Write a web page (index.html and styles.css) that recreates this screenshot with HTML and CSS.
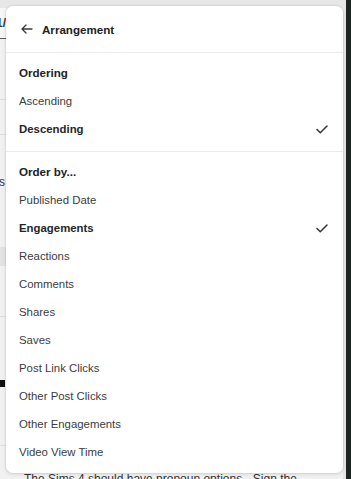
FILE: index.html
```html
<!DOCTYPE html>
<html>
<head>
<meta charset="utf-8">
<link rel="stylesheet" href="styles.css">
</head>
<body>
<div class="screen">
  <div class="page">
    <div class="topbar"></div>
    <div class="tabrow"><span class="tab">11/</span></div>
    <div class="gap g1"></div>
    <div class="rule"></div>
    <div class="gap g2"></div>
    <div class="rule"></div>
    <div class="gap g3"></div>
    <div class="frag">Posts</div>
    <div class="gap g4"></div>
    <div class="block"></div>
    <div class="gap g5"></div>
    <div class="rule"></div>
    <div class="gap g6"></div>
    <div class="dark"></div>
    <div class="gap g7"></div>
    <div class="rule"></div>
    <div class="gap g8"></div>
    <div class="caption">The Sims 4 should have pronoun options - Sign the</div>
  </div>
  <div class="strip"><div class="strip-light"></div><div class="strip-dark"></div></div>

  <div class="menu">
    <div class="menu-header">
      <svg class="back" width="12" height="10" viewBox="0 0 12 10"><path d="M11 5H1.5M5 1L1 5l4 4" fill="none" stroke="#3a3a3a" stroke-width="1.3" stroke-linecap="round" stroke-linejoin="round"/></svg>
      <span class="title">Arrangement</span>
    </div>
    <div class="section">
      <div class="heading">Ordering</div>
      <div class="item">Ascending</div>
      <div class="item selected">Descending<svg class="check" width="12" height="9" viewBox="0 0 12 9"><path d="M1 4.5l3.3 3.2L11 1" fill="none" stroke="#333" stroke-width="1.5" stroke-linecap="round" stroke-linejoin="round"/></svg></div>
    </div>
    <div class="section last">
      <div class="heading">Order by...</div>
      <div class="item">Published Date</div>
      <div class="item selected">Engagements<svg class="check" width="12" height="9" viewBox="0 0 12 9"><path d="M1 4.5l3.3 3.2L11 1" fill="none" stroke="#333" stroke-width="1.5" stroke-linecap="round" stroke-linejoin="round"/></svg></div>
      <div class="item">Reactions</div>
      <div class="item">Comments</div>
      <div class="item">Shares</div>
      <div class="item">Saves</div>
      <div class="item">Post Link Clicks</div>
      <div class="item">Other Post Clicks</div>
      <div class="item">Other Engagements</div>
      <div class="item">Video View Time</div>
    </div>
  </div>
</div>
</body>
</html>
```

FILE: styles.css
```css
* { box-sizing: border-box; }
html, body { margin: 0; padding: 0; }
body {
  width: 351px;
  height: 479px;
  overflow: hidden;
  background: #efefef;
  font-family: "Liberation Sans", Arial, sans-serif;
}
.screen {
  position: relative;
  display: flex;
  width: 351px;
  height: 479px;
  overflow: hidden;
}
.page {
  flex: 1;
  display: flex;
  flex-direction: column;
  background: #f1f1f1;
}
.topbar { height: 8px; background: #e7e7e7; flex: none; }
.tabrow {
  flex: none;
  height: 31px;
  border-bottom: 1px solid #5a5a5a;
  width: 6px;
  overflow: hidden;
  display: flex;
  align-items: center;
  justify-content: flex-end;
  background: #f6f6f6;
}
.tab { font-size: 12px; font-weight: 700; color: #333; white-space: nowrap; }
.gap { flex: none; }
.g1 { height: 60px; }
.g2 { height: 34px; }
.g3 { height: 40px; }
.g4 { height: 58px; }
.g5 { height: 50px; }
.g6 { height: 63px; }
.g7 { height: 58px; }
.g8 { height: 26px; }
.rule { height: 1px; background: #dedede; flex: none; }
.frag {
  flex: none;
  width: 5px;
  overflow: hidden;
  direction: rtl;
  font-size: 12px;
  color: #333;
  height: 14px;
  line-height: 14px;
}
.block { flex: none; height: 19px; width: 6px; background: #e2e2e2; }
.dark { flex: none; height: 7px; width: 5px; background: #111; }
.caption {
  flex: none;
  padding-left: 24px;
  font-size: 12px;
  line-height: 14px;
  color: #333;
  white-space: nowrap;
}
.strip { flex: none; width: 8px; display: flex; }
.strip-light { width: 3px; background: #e6e6e6; }
.strip-dark { width: 5px; background: #1b2421; }

.menu {
  position: absolute;
  left: 6px;
  top: 6px;
  width: 337px;
  height: 467px;
  background: #fff;
  border-radius: 7px;
  box-shadow: 0 0 0 1px rgba(0,0,0,0.04), 0 1px 4px rgba(0,0,0,0.12);
  display: flex;
  flex-direction: column;
  overflow: hidden;
}
.menu-header {
  height: 47px;
  flex: none;
  display: flex;
  align-items: center;
  padding-left: 15px;
  gap: 9px;
  border-bottom: 1px solid #ebebeb;
}
.title { font-size: 11.6px; font-weight: 700; color: #222; }
.section {
  padding: 5px 0 8px;
  border-bottom: 1px solid #ebebeb;
  display: flex;
  flex-direction: column;
}
.section.last { border-bottom: none; padding-bottom: 7px; }
.heading {
  height: 29px;
  display: flex;
  align-items: center;
  padding-left: 13px;
  font-size: 11.6px;
  font-weight: 700;
  color: #222;
}
.item {
  height: 28px;
  display: flex;
  align-items: center;
  justify-content: space-between;
  padding: 0 15px 0 13px;
  font-size: 11.4px;
  color: #3c3c3c;
}
.item.selected { font-weight: 700; color: #262626; }
.check { display: block; }
```
